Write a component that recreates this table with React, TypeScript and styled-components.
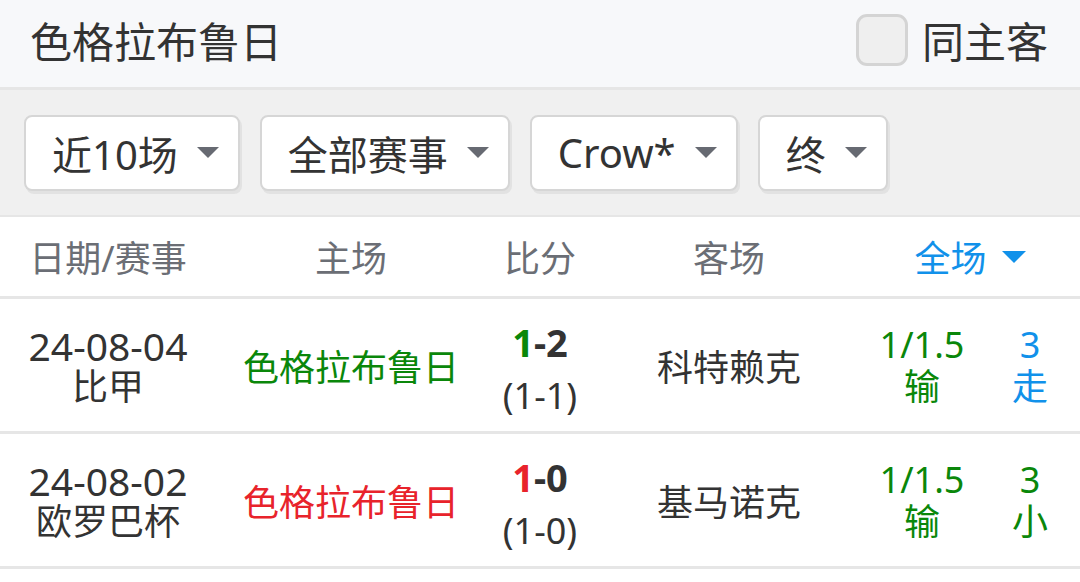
import React from 'react';
import styled, { createGlobalStyle } from 'styled-components';

const GlobalStyle = createGlobalStyle`
  html, body {
    margin: 0;
    padding: 0;
    background: #ffffff;
    font-family: "Noto Sans", "Noto Sans CJK SC", sans-serif;
    color: #333333;
  }
`;

const GREEN = '#0a870a';
const RED = '#e8232b';
const BLUE = '#1191ea';
const LINE = '#e6e6e6';

const TopBar = styled.div`
  height: 87px;
  background: #f7f8fa;
  border-bottom: 3px solid ${LINE};
  display: flex;
  align-items: center;
  justify-content: space-between;
  padding: 0 32px 0 30px;
`;

const TeamTitle = styled.div`
  font-size: 42px;
  color: #333;
  line-height: 1;
  margin-top: -4px;
`;

const CheckLabel = styled.label`
  display: flex;
  align-items: center;
  gap: 14px;
  font-size: 42px;
  line-height: 1;
  color: #333;
  margin-top: -4px;
`;

const CheckBox = styled.span`
  width: 46px;
  height: 46px;
  border: 3px solid #d4d4d4;
  border-radius: 11px;
  background: #efefef;
  margin-bottom: 4px;
`;

const FilterBar = styled.div`
  height: 127px;
  background: #f0f0f0;
  border-bottom: 2px solid ${LINE};
  display: flex;
  align-items: center;
  gap: 20px;
  padding: 0 24px;
  box-sizing: border-box;
`;

const FilterButton = styled.div`
  height: 76px;
  box-sizing: border-box;
  background: #fff;
  border: 2px solid #d6d6d6;
  border-radius: 8px;
  box-shadow: 2px 3px 0 #e2e2e2;
  display: flex;
  align-items: center;
  gap: 19px;
  padding: 0 19px 0 26px;
  font-size: 40px;
  color: #333;
`;

const Caret = styled.span<{ color: string; w: number }>`
  width: 0;
  height: 0;
  border-left: ${(p) => p.w / 2}px solid transparent;
  border-right: ${(p) => p.w / 2}px solid transparent;
  border-top: ${(p) => p.w / 2}px solid ${(p) => p.color};
`;

const Row = styled.div<{ h: number }>`
  display: grid;
  grid-template-columns: 216px 270px 108px 270px 116px 100px;
  height: ${(p) => p.h}px;
  border-bottom: 3px solid ${LINE};
  align-items: center;
  text-align: center;
`;

const HeadCell = styled.div`
  font-size: 36px;
  color: #6b6e75;
`;

const FullHead = styled.div`
  grid-column: span 2;
  display: flex;
  align-items: center;
  justify-content: center;
  gap: 15px;
  font-size: 36px;
  color: ${BLUE};
  padding-right: 4px;
`;

const Stack = styled.div<{ lh: number; shift?: number }>`
  display: flex;
  flex-direction: column;
  align-items: center;
  font-size: 36px;
  line-height: ${(p) => p.lh}px;
  margin-top: ${(p) => p.shift || 0}px;
`;

const Line = styled.span<{ color?: string; bold?: boolean; size?: number }>`
  color: ${(p) => p.color || '#333'};
  font-weight: ${(p) => (p.bold ? 700 : 400)};
  font-size: ${(p) => (p.size ? `${p.size}px` : 'inherit')};
  white-space: nowrap;
`;

const Team = styled.div<{ color: string }>`
  font-size: 36px;
  color: ${(p) => p.color};
  white-space: nowrap;
`;

type Match = {
  date: string;
  league: string;
  homeColor: string;
  first: string;
  firstColor: string;
  rest: string;
  half: string;
  away: string;
  hcap: string;
  hcapRes: string;
  total: string;
  totalRes: string;
  totalColor: string;
};

const matches: Match[] = [
  {
    date: '24-08-04',
    league: '比甲',
    homeColor: GREEN,
    first: '1',
    firstColor: GREEN,
    rest: '-2',
    half: '(1-1)',
    away: '科特赖克',
    hcap: '1/1.5',
    hcapRes: '输',
    total: '3',
    totalRes: '走',
    totalColor: BLUE,
  },
  {
    date: '24-08-02',
    league: '欧罗巴杯',
    homeColor: RED,
    first: '1',
    firstColor: RED,
    rest: '-0',
    half: '(1-0)',
    away: '基马诺克',
    hcap: '1/1.5',
    hcapRes: '输',
    total: '3',
    totalRes: '小',
    totalColor: GREEN,
  },
];

const App: React.FC = () => {
  return (
    <>
      <GlobalStyle />
      <TopBar>
        <TeamTitle>色格拉布鲁日</TeamTitle>
        <CheckLabel>
          <CheckBox />
          同主客
        </CheckLabel>
      </TopBar>
      <FilterBar>
        {['近10场', '全部赛事', 'Crow*', '终'].map((f) => (
          <FilterButton key={f}>
            {f}
            <Caret color="#676a72" w={22} />
          </FilterButton>
        ))}
      </FilterBar>
      <Row h={79}>
        <HeadCell>日期/赛事</HeadCell>
        <HeadCell>主场</HeadCell>
        <HeadCell>比分</HeadCell>
        <HeadCell>客场</HeadCell>
        <FullHead>
          全场
          <Caret color={BLUE} w={24} />
        </FullHead>
      </Row>
      {matches.map((m) => (
        <Row h={132} key={m.date}>
          <Stack lh={41} shift={2}>
            <Line size={39}>{m.date}</Line>
            <Line>{m.league}</Line>
          </Stack>
          <Team color={m.homeColor}>色格拉布鲁日</Team>
          <Stack lh={53} shift={8}>
            <Line bold size={38}>
              <Line bold color={m.firstColor}>
                {m.first}
              </Line>
              {m.rest}
            </Line>
            <Line>{m.half}</Line>
          </Stack>
          <Team color="#333">{m.away}</Team>
          <Stack lh={42} shift={2}>
            <Line color={GREEN}>{m.hcap}</Line>
            <Line color={GREEN}>{m.hcapRes}</Line>
          </Stack>
          <Stack lh={42} shift={2}>
            <Line color={m.totalColor}>{m.total}</Line>
            <Line color={m.totalColor}>{m.totalRes}</Line>
          </Stack>
        </Row>
      ))}
    </>
  );
};

export default App;
